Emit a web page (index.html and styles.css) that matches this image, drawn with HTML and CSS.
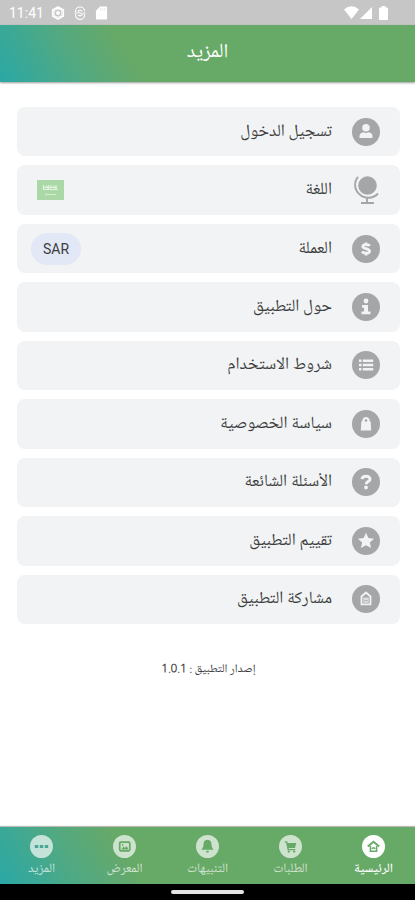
FILE: index.html
```html
<!DOCTYPE html>
<html lang="ar" dir="rtl">
<head>
<meta charset="utf-8">
<meta name="viewport" content="width=device-width, initial-scale=1">
<title>المزيد</title>
<link rel="stylesheet" href="styles.css">
</head>
<body>
<div class="status" dir="ltr">
  <span class="clock">11:41</span>
  <svg class="status-icon" viewBox="0 0 14 14" aria-hidden="true"><path d="M7 1l5.200 3v6L7 13l-5.200-3V4z" fill="none" stroke="#fff" stroke-width="1.800" stroke-linejoin="round"/><circle cx="7" cy="7" r="4" fill="none" stroke="#fff" stroke-width=".8"/><circle cx="7" cy="7" r="2" fill="#fff"/></svg>
  <svg class="status-icon" viewBox="0 0 14 14" aria-hidden="true"><path d="M2.500 6V5a4.500 4 0 0 1 9 0M11.500 8v1a4.500 4.500 0 0 1-9 0V8M1.500 7h3M9.500 7h3M9 5.200C8 3.800 5 4 5 5.600S9 7 9 8.600 6 10.200 5 8.800" fill="none" stroke="#fff" stroke-width="1.100"/></svg>
  <svg class="status-icon sd" viewBox="0 0 14 14" aria-hidden="true"><path d="M5.500 0H12q1 0 1 1v12q0 1-1 1H2q-1 0-1-1V4.500z" fill="#fff"/><path d="M6 2v2M8.300 2v2M10.600 2v2" stroke="#dedede"/></svg>
  <span class="spacer"></span>
  <svg class="wifi" viewBox="0 0 15 13" aria-hidden="true"><path d="M0 3.500Q7.500-3 15 3.500L7.500 13z" fill="#fff"/></svg>
  <svg class="signal" viewBox="0 0 12 12" aria-hidden="true"><path d="M12 0v12H0z" fill="#fff"/></svg>
  <svg class="battery" viewBox="0 0 9 14" aria-hidden="true"><path d="M2.500 0h4v1.500H8q1 0 1 1V13q0 1-1 1H1q-1 0-1-1V2.500q0-1 1-1h1.500z" fill="#fff"/></svg>
</div>
<header class="bar"><h1>المزيد</h1></header>
<main>
  <ul class="menu">
    <li><a class="row" href="#login">
      <svg class="icon" viewBox="0 0 28 28" aria-hidden="true"><circle cx="14" cy="14" r="14" fill="#a5a6a7"/><circle cx="14" cy="9.800" r="3.800" fill="#f1f3f4"/><path d="M7.500 20v-1.500q0-3.800 4-4.200 2.500 1.400 5 0 4 .4 4 4.200V20z" fill="#f1f3f4"/></svg>
      <span>تسجيل الدخول</span></a></li>
    <li><a class="row" href="#language">
      <svg class="icon" viewBox="0 0 28 28" aria-hidden="true"><circle cx="15.500" cy="9.500" r="9.300" fill="#a5a6a7"/><path d="M6 .8a12.500 12.500 0 0 0 1.500 17.500A13 13 0 0 0 26 17.500M15 21.500v5M9 27h13" fill="none" stroke="#a5a6a7" stroke-width="1.900"/></svg>
      <span>اللغة</span>
      <svg class="flag" viewBox="0 0 27 20" role="img" aria-label="العربية"><path d="M0 0h27v20H0z" fill="#aad8a6"/><path d="M6.500 5v4M9 5.500l2 3M11.500 5v4M14 5v3.500M16 6l3 2.500M19 5v4M6 9.500h15M7 7.500h13" fill="none" stroke="#e2f3e0" stroke-width="1.200"/><path d="M8 14.500h11M9 13.500v2" stroke="#d4edd1" stroke-width="1"/></svg></a></li>
    <li><a class="row" href="#currency">
      <svg class="icon" viewBox="0 0 28 28" aria-hidden="true"><circle cx="14" cy="14" r="14" fill="#a5a6a7"/><path d="M17.600 11c-.8-1.700-6.500-2.200-6.800.3-.2 2.900 6.800 1.900 6.800 5 0 2.700-6.300 2.300-7.400.1M14 7.500v2.500M14 18v2.500" fill="none" stroke="#f1f3f4" stroke-width="2.800"/></svg>
      <span>العملة</span><span class="chip">SAR</span></a></li>
    <li><a class="row" href="#about">
      <svg class="icon" viewBox="0 0 28 28" aria-hidden="true"><circle cx="14" cy="14" r="14" fill="#a5a6a7"/><circle cx="14" cy="8" r="2.400" fill="#f1f3f4"/><path d="M10 12h6v6.500h2.500v2.700h-9v-2.700H12v-3.800h-2z" fill="#f1f3f4"/></svg>
      <span>حول التطبيق</span></a></li>
    <li><a class="row" href="#terms">
      <svg class="icon" viewBox="0 0 28 28" aria-hidden="true"><circle cx="14" cy="14" r="14" fill="#a5a6a7"/><path d="M10.800 9.800h10.400M10.800 14h10.400M10.800 18.200h10.400M7 9.800h2.500M7 14h2.500M7 18.200h2.500" stroke="#f1f3f4" stroke-width="2.400"/></svg>
      <span>شروط الاستخدام</span></a></li>
    <li><a class="row" href="#privacy">
      <svg class="icon" viewBox="0 0 28 28" aria-hidden="true"><circle cx="14" cy="14" r="14" fill="#a5a6a7"/><path d="M9.300 11.500h.8q.4-4.500 3.900-4.500t3.900 4.500h.8l.5 9H8.800z" fill="#f1f3f4"/><circle cx="14" cy="10.500" r="1.300" fill="#a5a6a7"/></svg>
      <span>سياسة الخصوصية</span></a></li>
    <li><a class="row" href="#faq">
      <svg class="icon" viewBox="0 0 28 28" aria-hidden="true"><circle cx="14" cy="14" r="14" fill="#a5a6a7"/><path d="M10 11.200c.3-4 8.200-3.800 8 0 0 2.400-3.800 2.200-3.800 5" fill="none" stroke="#f1f3f4" stroke-width="3"/><circle cx="14" cy="19.500" r="1.900" fill="#f1f3f4"/></svg>
      <span>الأسئلة الشائعة</span></a></li>
    <li><a class="row" href="#rate">
      <svg class="icon" viewBox="0 0 28 28" aria-hidden="true"><circle cx="14" cy="14" r="14" fill="#a5a6a7"/><path d="M14 5.800l2.400 5.300 5.700.6-4.300 3.800 1.300 5.600-5.100-2.900-5.100 2.900 1.300-5.600-4.300-3.800 5.700-.6z" fill="#f1f3f4"/></svg>
      <span>تقييم التطبيق</span></a></li>
    <li><a class="row" href="#share">
      <svg class="icon" viewBox="0 0 28 28" aria-hidden="true"><circle cx="14" cy="14" r="14" fill="#a5a6a7"/><path d="M9.500 19.300V11.500L14 7.500l4.500 4v7.800z" fill="none" stroke="#f1f3f4" stroke-width="1.800"/><path d="M11.300 12.500h5.400v5.300h-5.400z" fill="#dcdddd"/><path d="M12.300 15.500h3.400" stroke="#b5b6b7"/></svg>
      <span>مشاركة التطبيق</span></a></li>
  </ul>
  <p class="version">إصدار التطبيق : 1.0.1</p>
</main>
<nav class="tabs">
  <a class="tab active" href="#home"><svg viewBox="0 0 24 24" aria-hidden="true"><circle cx="12" cy="12" r="12" fill="#fff"/><path d="M6 12L12 7l6 5" fill="none" stroke="#67a967" stroke-width="2"/><path d="M8.800 11.500V17h6.400v-5.500" fill="none" stroke="#67a967" stroke-width="1.600"/><path d="M10.300 14.500q1.700-2.500 3.400 0" fill="none" stroke="#67a967" stroke-width="1.600"/></svg><span>الرئيسية</span></a>
  <a class="tab" href="#orders"><svg viewBox="0 0 24 24" aria-hidden="true"><circle cx="12" cy="12" r="12" fill="#fff"/><path d="M6 6.500h2.500l.6 1.800H18l-1.300 5.200H10l.3 1.200H17V16H9L7.400 7.800H6z" fill="#67a967"/><circle cx="10.200" cy="17.300" r="1.200" fill="#67a967"/><circle cx="15.800" cy="17.300" r="1.200" fill="#67a967"/></svg><span>الطلبات</span></a>
  <a class="tab" href="#alerts"><svg viewBox="0 0 24 24" aria-hidden="true"><circle cx="12" cy="12" r="12" fill="#fff"/><path d="M12 5c3.200.3 4.200 2.500 4.200 5 0 2.300.6 3.800 2.300 5.500h-13C7.200 13.800 7.800 12.300 7.800 10c0-2.500 1-4.700 4.200-5zM10.300 16.500h3.400q-.5 2-1.700 2t-1.700-2z" fill="#67a967"/></svg><span>التنبيهات</span></a>
  <a class="tab" href="#gallery"><svg viewBox="0 0 24 24" aria-hidden="true"><circle cx="12" cy="12" r="12" fill="#fff"/><rect x="7" y="7.500" width="10.500" height="9" rx="1" fill="none" stroke="#67a967" stroke-width="1.800"/><path d="M8.500 15l2.500-3 1.500 1.500 1.700-2 2 3.500z" fill="#67a967"/><circle cx="10" cy="10.300" r="1" fill="#67a967"/></svg><span>المعرض</span></a>
  <a class="tab" href="#more"><svg viewBox="0 0 24 24" aria-hidden="true"><circle cx="12" cy="12" r="12" fill="#fff"/><path d="M5 10.400h3.600v3.200H5zM10.200 10.400h3.600v3.200h-3.600zM15.400 10.400H19v3.200h-3.600z" fill="#4ba69a"/></svg><span>المزيد</span></a>
</nav>
<div class="system"><span class="pill"></span></div>
</body>
</html>
```
FILE: styles.css
```css
* { box-sizing: border-box; }
body {
  margin: 0;
  min-height: 100vh;
  display: flex;
  flex-direction: column;
  background: #fff;
  color: #3c3d3e;
  font-family: "Noto Naskh Arabic UI", "Noto Naskh Arabic", Roboto, "Noto Sans Arabic", "DejaVu Sans", sans-serif;
}
a { color: inherit; text-decoration: none; }
.status {
  height: 25px;
  display: flex;
  align-items: center;
  padding: 0 27px 0 9px;
  background: #c6c6c6;
  color: #fff;
  font: 14px Roboto, sans-serif;
}
.clock { width: 42px; }
.status-icon { width: 14px; height: 14px; margin-right: 8px; }
.sd { width: 13px; }
.spacer { flex: 1; }
.wifi { width: 15px; height: 13px; }
.signal { width: 12px; height: 12px; margin: 0 7px 0 1px; }
.battery { width: 9px; height: 14px; }
.bar, .tabs {
  background: linear-gradient(60deg, #2aa8a6 0, #55a97e 80px, #67a967 125px);
}
.bar {
  height: 57px;
  display: flex;
  align-items: center;
  justify-content: center;
  padding-bottom: 2px;
  color: #fff;
  box-shadow: 0 1px 2px #0006;
}
h1 { margin: 0; font-size: 20px; line-height: 24px; font-weight: 400; }
main {
  flex: 1;
  display: flex;
  flex-direction: column;
  padding: 25px 15px 0 17px;
}
.menu {
  flex: 1;
  display: grid;
  grid-auto-rows: 1fr;
  gap: 9px;
  margin: 0;
  padding: 0;
  list-style: none;
}
.row {
  height: 100%;
  display: flex;
  align-items: center;
  gap: 20px;
  padding: 0 20px 0 14px;
  border-radius: 8px;
  background: #f1f3f4;
  font-size: 17px;
  line-height: 24px;
}
.icon { width: 28px; height: 28px; flex: none; }
.flag { width: 27px; height: 20px; margin: 0 auto 0 6px; }
.chip {
  margin-right: auto;
  padding: 4px 12px;
  border-radius: 16px;
  background: #e2e8f5;
  font: 14px/24px Roboto, sans-serif;
}
.version {
  height: 203px;
  margin: 0;
  padding-top: 36px;
  text-align: center;
  font-size: 12px;
  line-height: 20px;
}
.tabs {
  height: 57px;
  display: flex;
  box-shadow: 0 -1px 1px #0004;
}
.tab {
  flex: 1;
  display: flex;
  flex-direction: column;
  align-items: center;
  gap: 3px;
  padding-top: 8px;
  color: #fff;
  font-size: 13px;
  line-height: 16px;
  opacity: .68;
}
.tab.active { opacity: 1; font-weight: 500; }
.tab svg { width: 23px; height: 23px; }
.system {
  height: 16px;
  display: flex;
  align-items: center;
  justify-content: center;
  background: #000;
}
.pill { width: 73px; height: 4px; border-radius: 2px; background: #e4e4e4; }
```
